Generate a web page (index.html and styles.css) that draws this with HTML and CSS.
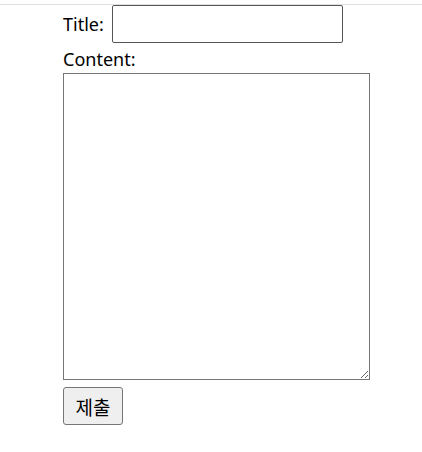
FILE: index.html
```html
<!DOCTYPE html>
<html lang="ko">
<head>
<meta charset="utf-8">
<link rel="stylesheet" href="styles.css">
</head>
<body>
<div class="topbar"></div>
<form class="post-form">
  <div class="title-row">
    <label class="label" for="title">Title:</label>
    <input class="title-input" id="title" type="text">
  </div>
  <label class="label content-label" for="content">Content:</label>
  <textarea class="content-input" id="content"></textarea>
  <button class="submit" type="submit">제출</button>
</form>
</body>
</html>
```
FILE: styles.css
```css
html, body {
  margin: 0;
  padding: 0;
  background: #fff;
}
body {
  font-family: "Noto Sans", "Noto Sans CJK KR", sans-serif;
  font-size: 18px;
  color: #000;
}
.topbar {
  height: 4px;
  border-bottom: 1px solid #e0e0e0;
}
.post-form {
  display: flex;
  flex-direction: column;
  align-items: flex-start;
  padding-left: 63px;
}
.title-row {
  display: flex;
  align-items: center;
  gap: 8px;
  height: 38px;
}
.label {
  font-size: 18px;
  line-height: 24px;
}
.title-input {
  box-sizing: border-box;
  width: 231px;
  height: 38px;
  border: 1px solid #555;
  border-radius: 2px;
  font-size: 18px;
  padding: 1px 4px;
  margin: 0;
}
.content-label {
  display: block;
  box-sizing: border-box;
  height: 30px;
  line-height: 27px;
  padding-top: 3px;
}
.content-input {
  box-sizing: border-box;
  display: block;
  width: 307px;
  height: 307px;
  border: 1px solid #767676;
  border-radius: 0;
  margin: 0;
  font-size: 18px;
}
.submit {
  box-sizing: border-box;
  margin-top: 7px;
  width: 60px;
  height: 38px;
  font-family: "Noto Sans CJK KR", sans-serif;
  font-size: 19px;
  background: #efefef;
  border: 1px solid #767676;
  border-radius: 3px;
  padding: 0;
  color: #000;
}
```
